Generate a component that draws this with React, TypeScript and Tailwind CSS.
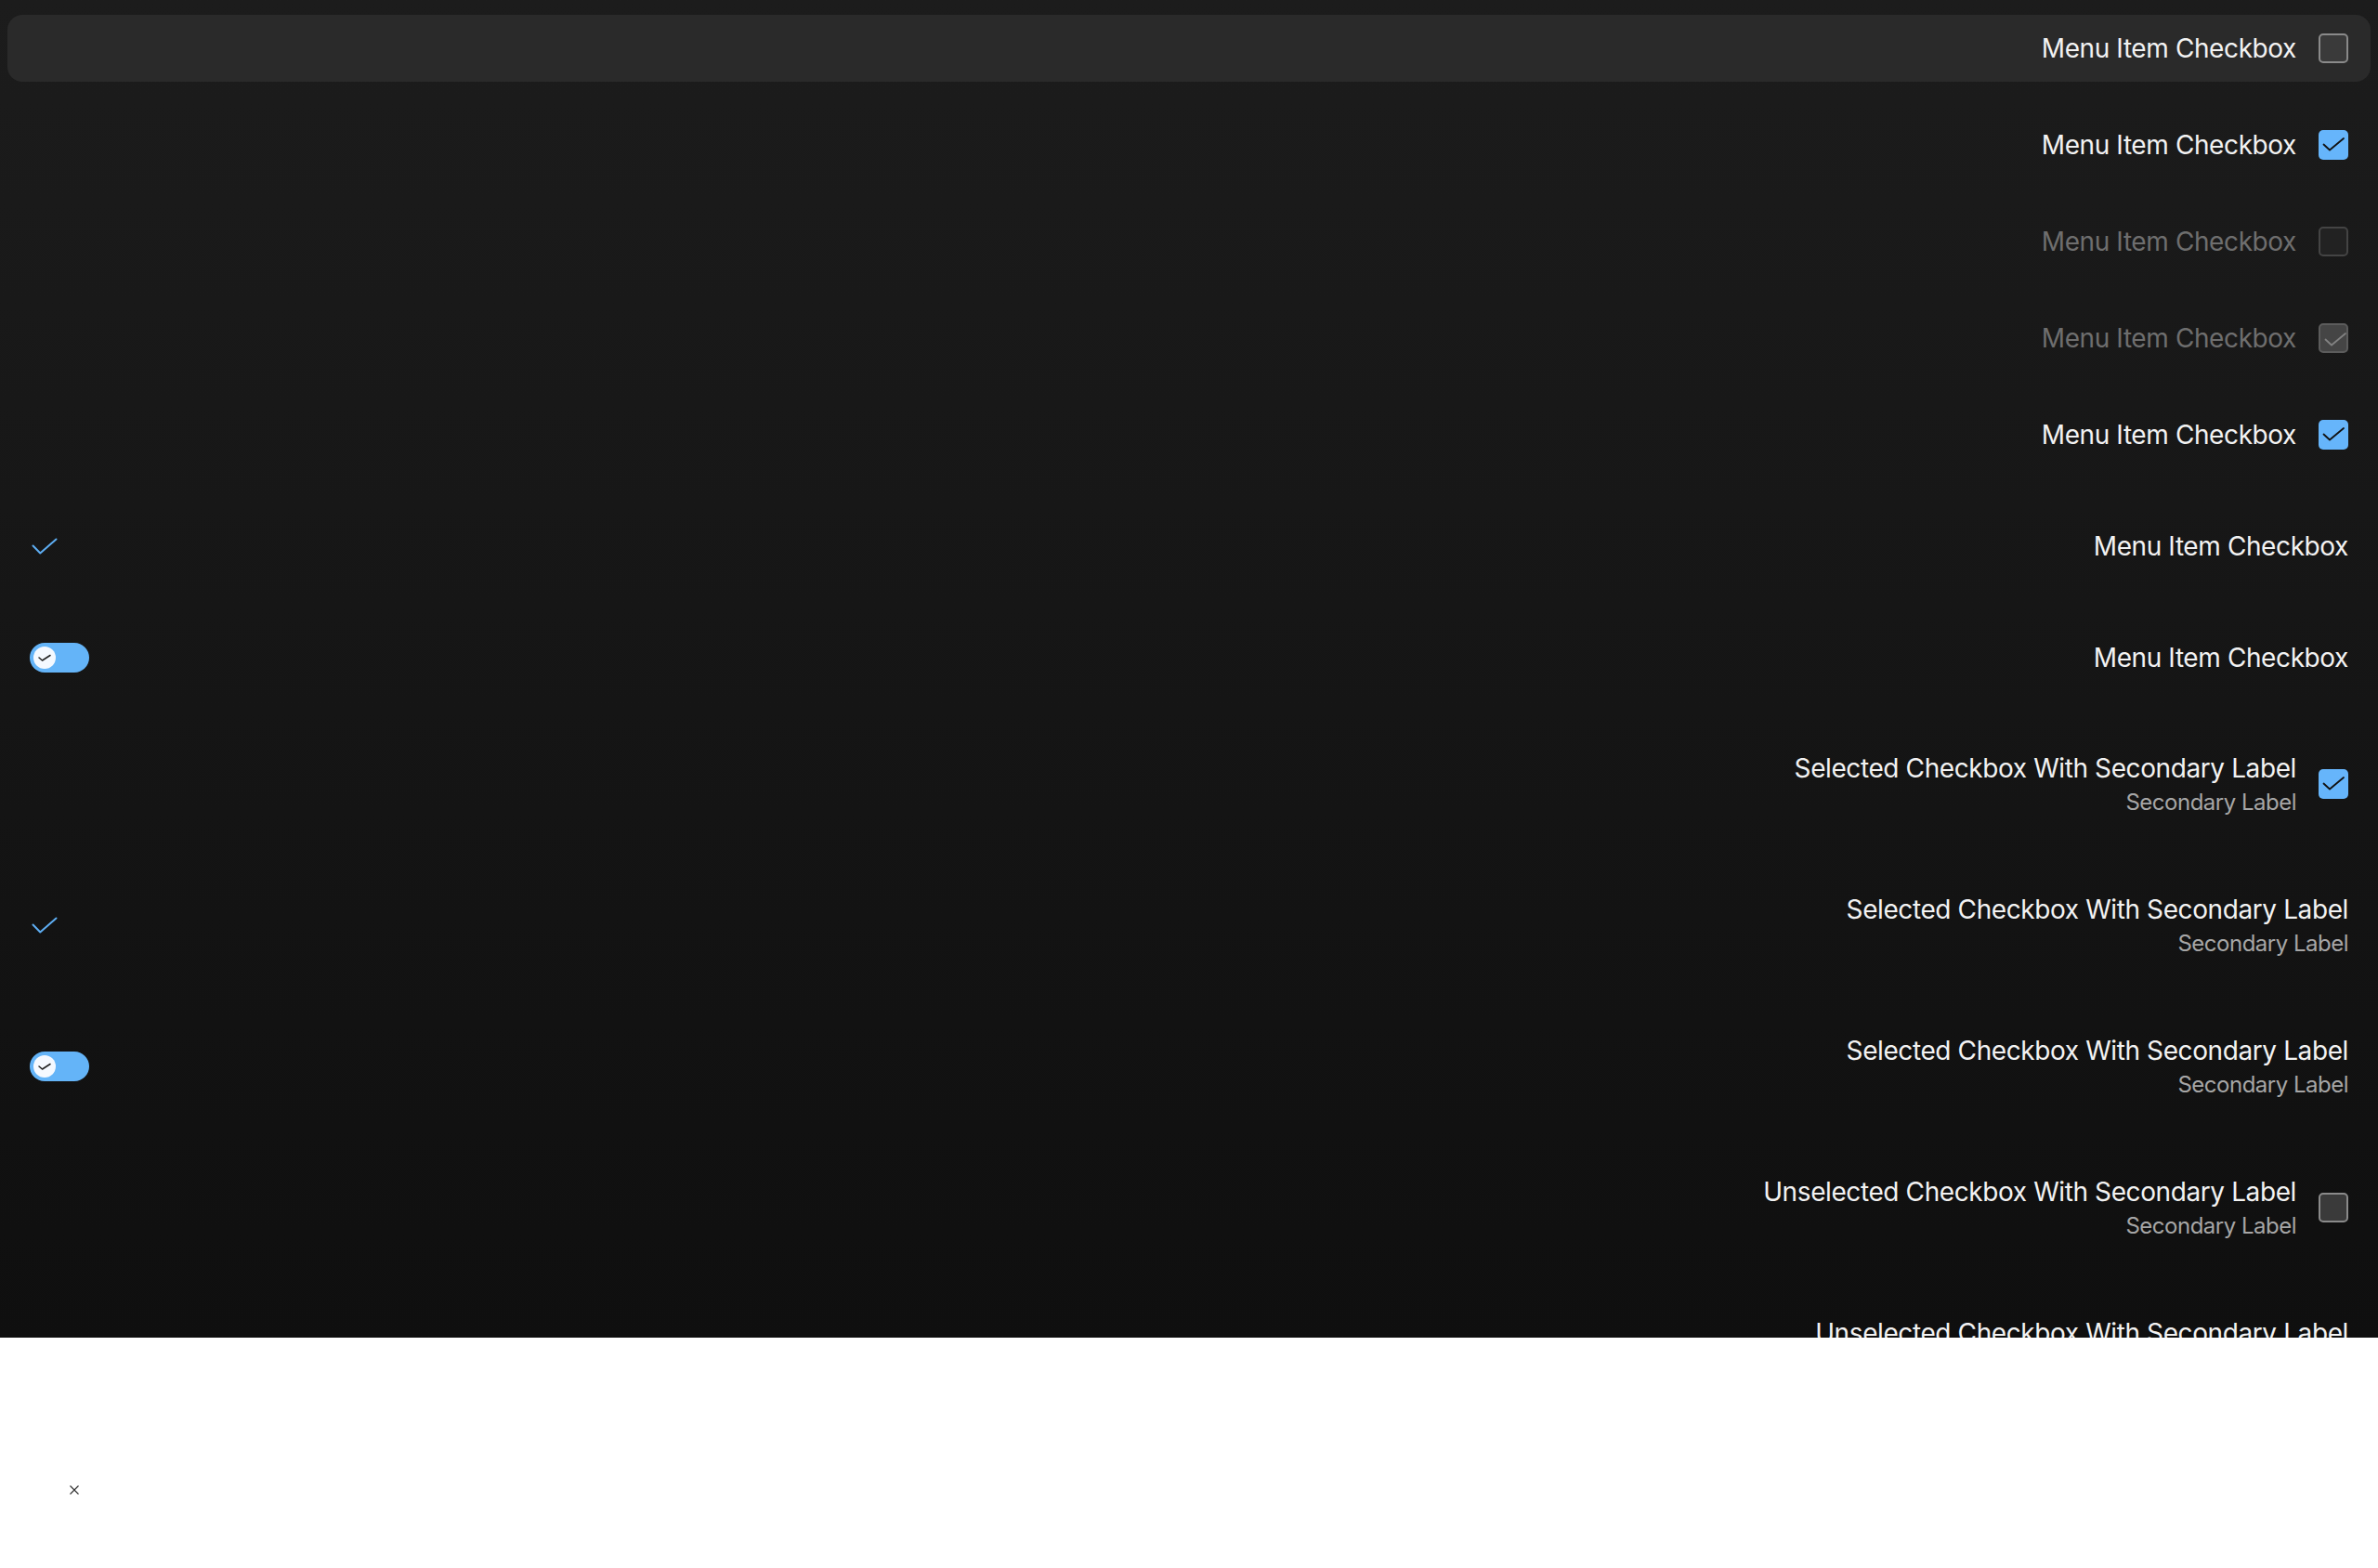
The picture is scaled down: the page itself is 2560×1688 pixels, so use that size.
import React from "react";

type Lead = "none" | "check" | "toggle";
type Box = "none" | "off" | "on" | "disOff" | "disOn";

const rows: {
  label: string;
  sub?: string;
  lead: Lead;
  box: Box;
  hover?: boolean;
  cls: string;
}[] = [
  { label: "Menu Item Checkbox", lead: "none", box: "off", hover: true, cls: "h-[72px]" },
  { label: "Menu Item Checkbox", lead: "none", box: "on", cls: "h-[72px] mt-8" },
  { label: "Menu Item Checkbox", lead: "none", box: "disOff", cls: "h-[72px] mt-8" },
  { label: "Menu Item Checkbox", lead: "none", box: "disOn", cls: "h-[72px] mt-8" },
  { label: "Menu Item Checkbox", lead: "none", box: "on", cls: "h-[72px] mt-8" },
  { label: "Menu Item Checkbox", lead: "check", box: "none", cls: "h-[72px] mt-12" },
  { label: "Menu Item Checkbox", lead: "toggle", box: "none", cls: "h-[72px] mt-12" },
  { label: "Selected Checkbox With Secondary Label", sub: "Secondary Label", lead: "none", box: "on", cls: "h-[104px] mt-12" },
  { label: "Selected Checkbox With Secondary Label", sub: "Secondary Label", lead: "check", box: "none", cls: "h-[104px] mt-12" },
  { label: "Selected Checkbox With Secondary Label", sub: "Secondary Label", lead: "toggle", box: "none", cls: "h-[104px] mt-12" },
  { label: "Unselected Checkbox With Secondary Label", sub: "Secondary Label", lead: "none", box: "off", cls: "h-[104px] mt-12" },
  { label: "Unselected Checkbox With Secondary Label", sub: "Secondary Label", lead: "none", box: "none", cls: "h-[104px] mt-12" },
];

function CheckBox({ kind }: { kind: Box }) {
  if (kind === "none") return null;
  let cls = "";
  let stroke = "#111111";
  if (kind === "off") cls = "bg-[#3a3a3a] border-2 border-[#8a8a8a]";
  if (kind === "on") cls = "bg-[#66b5fb]";
  if (kind === "disOff") cls = "bg-[#222222] border-2 border-[#444444]";
  if (kind === "disOn") {
    cls = "bg-[#454545] border-2 border-[#5c5c5c]";
    stroke = "#828282";
  }
  return (
    <div className={"ml-6 w-8 h-8 shrink-0 rounded-[5px] relative " + cls}>
      {(kind === "on" || kind === "disOn") && (
        <svg
          className="absolute -left-px -top-px"
          width="34"
          height="34"
          viewBox="-1 -1 34 34"
          fill="none"
        >
          <path
            d="M5.5 15.5 L12 21.5 L27 9"
            stroke={stroke}
            strokeWidth="1.8"
            strokeLinecap="round"
            strokeLinejoin="round"
          />
        </svg>
      )}
    </div>
  );
}

function LeadIcon({ kind }: { kind: Lead }) {
  if (kind === "check") {
    return (
      <svg width="32" height="32" viewBox="0 0 32 32" fill="none">
        <path
          d="M3.5 15.5 L11.3 23.5 L28.5 8.5"
          stroke="#5eaef3"
          strokeWidth="2"
          strokeLinecap="round"
          strokeLinejoin="round"
        />
      </svg>
    );
  }
  if (kind === "toggle") {
    return (
      <div className="w-16 h-8 rounded-full bg-[#64b4f8] flex items-center px-1">
        <div className="w-6 h-6 rounded-full bg-[#f5f9ff] flex items-center justify-center">
          <svg width="24" height="24" viewBox="0 0 24 24" fill="none">
            <path
              d="M6 12 L9.5 15 L18 9.5"
              stroke="#222222"
              strokeWidth="1.5"
              strokeLinecap="round"
              strokeLinejoin="round"
            />
          </svg>
        </div>
      </div>
    );
  }
  return <div />;
}

export default function App() {
  return (
    <div
      className="w-full h-[1688px] bg-white flex flex-col"
      style={{ fontFamily: "Inter, 'Noto Sans', sans-serif" }}
    >
      <div className="h-[1440px] shrink-0 overflow-hidden bg-gradient-to-b from-[#1c1c1c] to-[#0f0f0f] px-2 pt-4">
        {rows.map((row, key) => {
          const disabled = row.box === "disOff" || row.box === "disOn";
          return (
            <div
              key={key}
              className={
                "flex flex-row items-center justify-between px-6 rounded-2xl " +
                row.cls +
                (row.hover ? " bg-[#2a2a2a]" : "")
              }
            >
              <LeadIcon kind={row.lead} />
              <div className="flex flex-row items-center">
                <div className="flex flex-col items-end">
                  <span
                    className={
                      "text-[28px] leading-[36px] tracking-[-0.4px] whitespace-nowrap " +
                      (disabled ? "text-[#6e6e6e]" : "text-[#f2f2f2]")
                    }
                  >
                    {row.label}
                  </span>
                  {row.sub && (
                    <span className="pt-[3px] text-[24px] leading-[32px] tracking-[-0.5px] text-[#a6a6a6] whitespace-nowrap">
                      {row.sub}
                    </span>
                  )}
                </div>
                <CheckBox kind={row.box} />
              </div>
            </div>
          );
        })}
      </div>
      <div className="pl-[75px] pt-[159px]">
        <svg width="10" height="10" viewBox="0 0 10 10" fill="none">
          <path d="M0.5 0.5 L9.5 9.5 M9.5 0.5 L0.5 9.5" stroke="#333333" strokeWidth="1.2" />
        </svg>
      </div>
    </div>
  );
}
